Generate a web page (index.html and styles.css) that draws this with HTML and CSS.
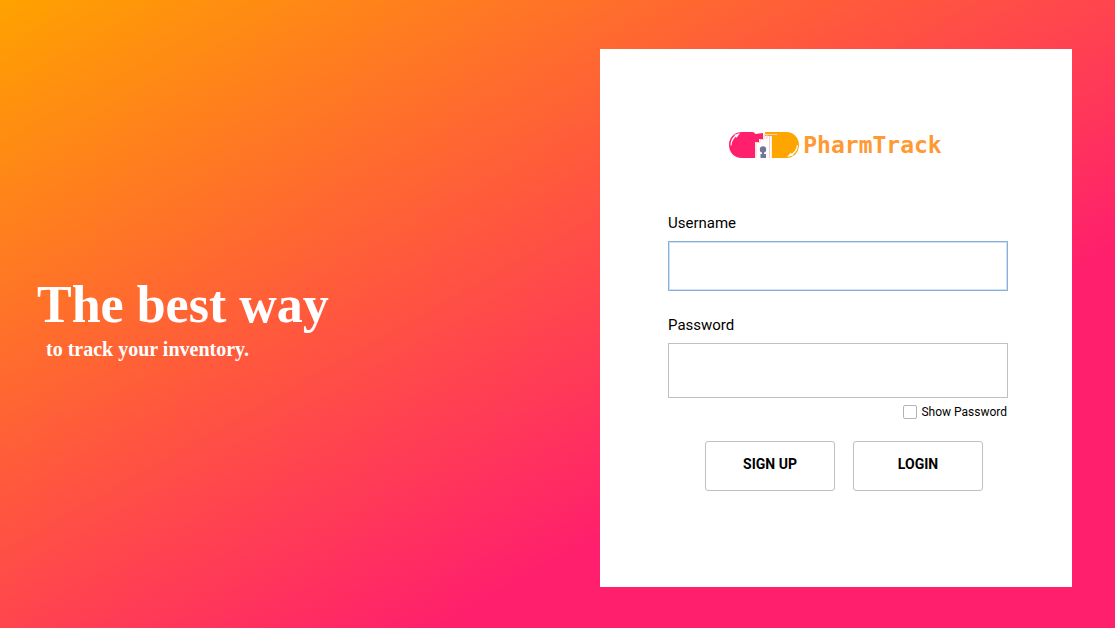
FILE: index.html
```html
<!DOCTYPE html>
<html lang="en">
<head>
<meta charset="utf-8">
<meta name="viewport" content="width=device-width, initial-scale=1">
<title>PharmTrack</title>
<link rel="stylesheet" href="styles.css">
</head>
<body>
<main class="page">
  <section class="hero">
    <h1 class="hero-title">The best way</h1>
    <p class="hero-sub">to track your inventory.</p>
  </section>
  <section class="card">
    <div class="brand">
      <svg class="brand-logo" viewBox="0 0 72 28" aria-hidden="true">
        <path d="M14 1h10q3 0 3 2l8-1v6h-4v3h-4v16H14C6 27 1 21 1 14S6 1 14 1z" fill="#ff1f6d"/>
        <path d="M37 1h21c8 0 13 6 13 13s-5 13-13 13H44V5h-7z" fill="#ffa500"/>
        <path d="M28 27V11.500h4V8.500h4V3.500h13M39 4v4M41.500 5v22" fill="none" stroke="#f7cfcf" stroke-width="1"/>
        <path d="M43.500 5v22" stroke="#fff3df" stroke-width="1"/>
        <circle cx="35" cy="18.500" r="3.200" fill="#73739c"/>
        <path d="M34 19h2v4h2v4h-5.500v-4H34z" fill="#73739c"/>
        <path d="M2.500 14.500C2.500 10 4 7 7 4.500L6 4l6-2-3.500 5-.5-1.500C5 8 3.800 11 3.500 14.500z" fill="#fff"/>
        <path d="M70 14c0 4-2 7.500-5 9.500l1 .8-7 1.700 4-4.500.5 1.500c3-2 5-5 5.500-9z" fill="#fff"/>
      </svg>
      <span class="brand-name">PharmTrack</span>
    </div>
    <form class="form">
      <label class="label" for="username">Username</label>
      <input class="input input-active" id="username" type="text">
      <label class="label label-next" for="password">Password</label>
      <input class="input input-tall" id="password" type="password">
      <label class="show"><input class="check" type="checkbox">Show Password</label>
      <div class="actions">
        <button class="button" type="button">SIGN UP</button>
        <button class="button" type="button">LOGIN</button>
      </div>
    </form>
  </section>
</main>
</body>
</html>
```

FILE: styles.css
```css
* { box-sizing: border-box; }

body {
  margin: 0;
  font-family: Roboto, "Liberation Sans", sans-serif;
  color: #000;
}

.page {
  min-height: 100vh;
  display: grid;
  grid-template-columns: 557fr 472fr;
  padding: 49px 43px 41px 37px;
  column-gap: 6px;
  background: linear-gradient(to bottom right, #ffa200 0%, #ff1f6d 70%);
}

.hero {
  align-self: center;
  color: #fff;
  font-family: "Palatino Linotype", Palatino, "Liberation Serif", serif;
  font-weight: 700;
}

.hero-title {
  margin: 0;
  font-size: 52px;
  line-height: 60px;
  font-weight: 700;
}

.hero-sub {
  margin: 2px 0 0 9px;
  font-size: 20px;
  line-height: 24px;
}

.card {
  background: #fff;
  padding: 80px 64px 80px 68px;
}

.brand {
  display: flex;
  align-items: center;
  justify-content: center;
  gap: 3px;
  height: 32px;
  padding-right: 6px;
}

.brand-logo {
  width: 72px;
  height: 28px;
}

.brand-name {
  font-family: "DejaVu Sans Mono", monospace;
  font-size: 23px;
  line-height: 32px;
  font-weight: 700;
  color: #ff9933;
}

.form {
  display: flex;
  flex-direction: column;
  margin-top: 52px;
}

.label {
  font-size: 15px;
  line-height: 20px;
  margin-bottom: 8px;
}

.label-next { margin-top: 24px; }

.input {
  width: 100%;
  height: 50px;
  padding: 0 12px;
  border: 1px solid #c0c0c0;
  background: #fff;
  font: inherit;
  outline: none;
}

.input-active {
  border-color: #87afda;
  box-shadow: inset 0 0 0 1px #cfe2f5;
}

.input-tall { height: 55px; }

.show {
  display: flex;
  align-items: center;
  align-self: flex-end;
  gap: 4px;
  margin-top: 6px;
  padding-right: 1px;
  font-size: 12px;
  line-height: 16px;
}

.check {
  appearance: none;
  width: 14px;
  height: 14px;
  margin: 0;
  border: 1px solid #b4b4b4;
  border-radius: 2px;
  background: #fff;
}

.check:checked { background: #87afda; }

.actions {
  display: flex;
  gap: 18px;
  margin-top: 21px;
  padding: 0 25px 0 37px;
}

.button {
  flex: 1;
  height: 50px;
  padding: 0 0 4px;
  border: 1px solid #c0c0c0;
  border-radius: 3px;
  background: #fff;
  color: #000;
  font: inherit;
  font-size: 14px;
  font-weight: 700;
}
```
